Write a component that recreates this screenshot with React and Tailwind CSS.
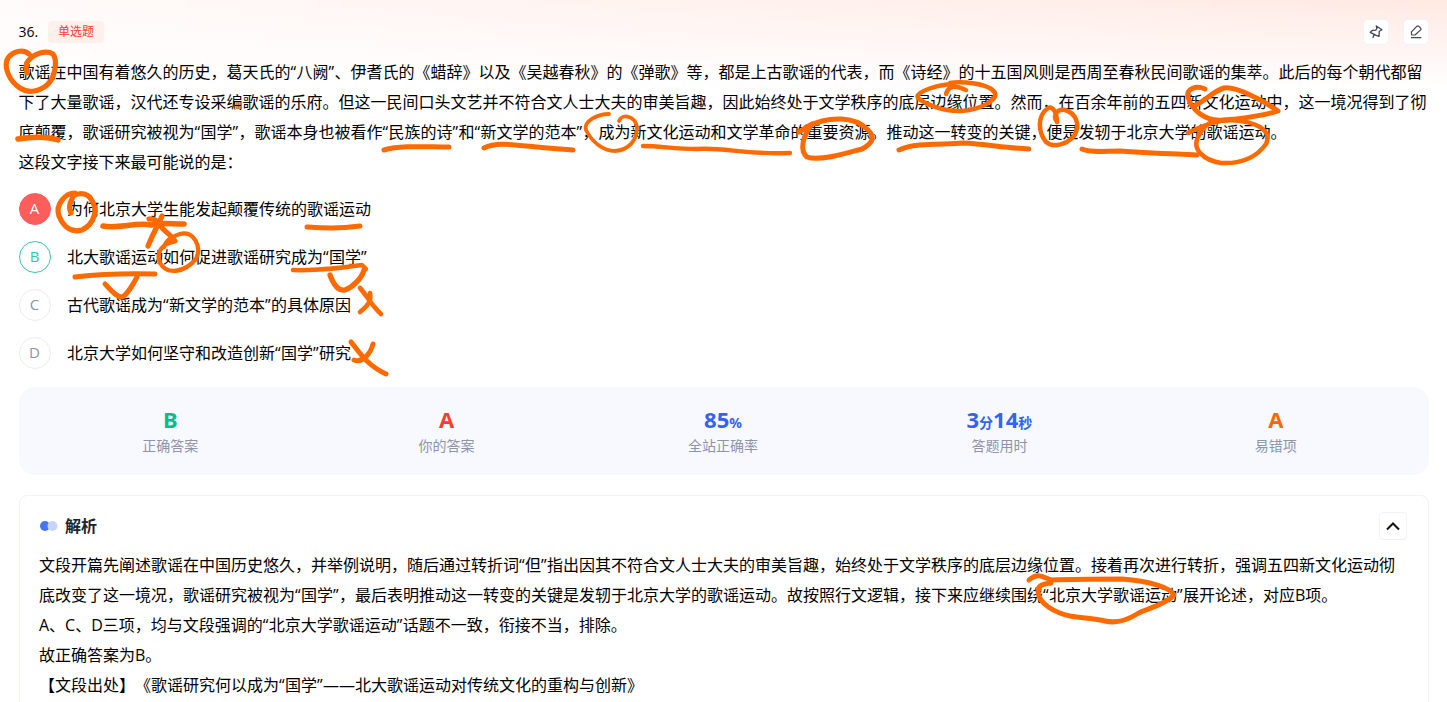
import React from "react";

const passage = [
  "歌谣在中国有着悠久的历史，葛天氏的“八阙”、伊耆氏的《蜡辞》以及《吴越春秋》的《弹歌》等，都是上古歌谣的代表，而《诗经》的十五国风则是西周至春秋民间歌谣的集萃。此后的每个朝代都留",
  "下了大量歌谣，汉代还专设采编歌谣的乐府。但这一民间口头文艺并不符合文人士大夫的审美旨趣，因此始终处于文学秩序的底层边缘位置。然而，在百余年前的五四新文化运动中，这一境况得到了彻",
  "底颠覆，歌谣研究被视为“国学”，歌谣本身也被看作“民族的诗”和“新文学的范本”，成为新文化运动和文学革命的重要资源。推动这一转变的关键，便是发轫于北京大学的歌谣运动。",
  "这段文字接下来最可能说的是：",
];

const options = [
  { key: "A", text: "为何北京大学生能发起颠覆传统的歌谣运动", style: "bg-[#ff5c5c] border-[#ff5c5c] text-white" },
  { key: "B", text: "北大歌谣运动如何促进歌谣研究成为“国学”", style: "bg-white border-[#34c9a3] text-[#34c9a3]" },
  { key: "C", text: "古代歌谣成为“新文学的范本”的具体原因", style: "bg-white border-[#e9edf9] text-[#8a94ad]" },
  { key: "D", text: "北京大学如何坚守和改造创新“国学”研究", style: "bg-white border-[#e9edf9] text-[#8a94ad]" },
];

const stats = [
  { label: "正确答案", color: "text-[#00bf8f]", parts: [["B", true]] },
  { label: "你的答案", color: "text-[#ff3b30]", parts: [["A", true]] },
  { label: "全站正确率", color: "text-[#2f64f5]", parts: [["85", true], ["%", false]] },
  { label: "答题用时", color: "text-[#2f64f5]", parts: [["3", true], ["分", false], ["14", true], ["秒", false]] },
  { label: "易错项", color: "text-[#ff6600]", parts: [["A", true]] },
];

const analysis = [
  "文段开篇先阐述歌谣在中国历史悠久，并举例说明，随后通过转折词“但”指出因其不符合文人士大夫的审美旨趣，始终处于文学秩序的底层边缘位置。接着再次进行转折，强调五四新文化运动彻",
  "底改变了这一境况，歌谣研究被视为“国学”，最后表明推动这一转变的关键是发轫于北京大学的歌谣运动。故按照行文逻辑，接下来应继续围绕“北京大学歌谣运动”展开论述，对应B项。",
  "A、C、D三项，均与文段强调的“北京大学歌谣运动”话题不一致，衔接不当，排除。",
  "故正确答案为B。",
  "【文段出处】《歌谣研究何以成为“国学”——北大歌谣运动对传统文化的重构与创新》",
];

const strokes = [
  [5.2, "M29 54C23 49 13 51 8 58C3 66 9 81 20 88C29 94 40 91 47 85C55 78 58 61 53 54C46 50 34 53 28 61C25 64 26 69 27 73"],
  [5.5, "M18 139C30 137 46 136 58 140"],
  [5, "M384 150C402 145 425 147 449 147"],
  [5, "M484 148C500 140 520 147 573 150"],
  [3.8, "M609 114C598 114 583 121 586 130C592 142 603 151 615 151C629 150 637 140 637 128C636 116 622 113 619 121"],
  [4.4, "M643 146C660 146 675 149 697 149C725 147 744 155 790 153"],
  [5, "M799 132L812 124C803 136 799 150 807 157C820 162 850 152 862 149C873 143 876 137 867 129C855 117 830 115 806 127"],
  [5, "M899 150C916 142 945 145 963 143C985 144 1006 148 1029 149"],
  [4.5, "M946 94C949 84 957 86 966 90M955 84C939 84 914 92 918 98C925 104 944 112 961 111C981 110 998 99 995 93C990 83 960 81 950 83"],
  [4.5, "M1057 122C1052 115 1057 109 1065 110C1076 113 1081 125 1074 136C1066 145 1053 148 1046 142C1038 132 1037 116 1048 108C1052 106 1057 111 1057 122"],
  [5, "M1082 149C1091 153 1104 151 1120 151C1150 153 1174 154 1197 155"],
  [5, "M1205 89C1196 85 1186 89 1188 97C1191 109 1205 122 1223 120C1240 119 1266 115 1278 111C1261 99 1235 86 1224 88C1214 91 1207 99 1196 105"],
  [4.5, "M1188 133C1204 125 1220 118 1241 121C1260 124 1272 132 1266 144C1256 158 1240 164 1221 163C1203 160 1192 149 1198 137C1202 128 1207 123 1215 121"],
  [5.2, "M75 193C65 193 55 205 59 216C64 228 72 233 82 230C94 224 99 210 91 199C86 191 73 193 72 199C69 204 69 209 71 213"],
  [5.5, "M103 226C119 229 136 222 151 225C163 222 170 224 184 224"],
  [5.2, "M149 219C158 218 160 225 163 229C168 233 172 237 175 241M162 216C158 226 154 231 148 246"],
  [5, "M307 227C323 228 337 229 360 226"],
  [4.3, "M164 247C166 240 173 236 180 234C194 230 202 247 196 259C184 273 167 275 160 263C156 252 162 244 173 242"],
  [5, "M75 277C101 274 119 273 155 274"],
  [5, "M105 284C111 290 116 297 122 297C127 295 131 288 137 277"],
  [4.5, "M293 270C318 271 341 268 362 265L366 269"],
  [5.2, "M330 275C334 286 339 291 345 290C353 287 362 278 364 270"],
  [4.6, "M360 288C365 293 371 305 381 314M370 293C372 302 366 307 360 312"],
  [5, "M351 342C358 350 366 365 386 374M373 344C371 352 363 364 354 360"],
  [5, "M1029 580C1039 571 1045 579 1052 580C1075 579 1105 579 1122 579C1150 581 1171 588 1174 595C1164 606 1144 609 1137 614C1129 619 1118 624 1105 621C1095 619 1083 618 1070 616C1056 613 1038 604 1038 591C1038 584 1045 584 1051 583"],
];

// Curly quotes get slightly wider tracking than the surrounding ideographs.
function Line({ text }) {
  return text.split(/([“”])/).map((part, i) =>
    part === "“" || part === "”" ? (
      <span key={i} className="tracking-[0.4px]">{part}</span>
    ) : (
      part
    )
  );
}

function IconButton({ children }) {
  return (
    <div className="flex size-[26px] items-center justify-center rounded-[5px] border border-[#f0f3fd] bg-white">
      {children}
    </div>
  );
}

export default function App() {
  return (
    <div className="relative h-[702px] w-full overflow-hidden bg-white font-['Open_Sans','Noto_Sans_CJK_SC',sans-serif] text-[16px] text-black [text-spacing-trim:space-all]">
      <div className="absolute inset-x-0 top-0 h-[90px] bg-linear-to-b from-[#ffe9e3] to-white" />
      <div className="absolute inset-x-0 top-0 h-[90px] bg-linear-to-r from-white/80 to-transparent" />
      <main className="relative pr-[19px] pl-[18.5px]">
        <header className="flex h-[57px] items-center justify-between pt-[7px]">
          <div className="flex items-center">
            <span className="w-[29.5px] pb-[2px] text-[14px]">36.</span>
            <span className="h-[22px] rounded bg-[#fff0ec] px-[10px] text-[12px] leading-[22px] text-[#ff3b30]">单选题</span>
          </div>
          <div className="-mr-px flex gap-[14px]">
            <IconButton>
              <svg width="16" height="16" viewBox="0 0 16 16" fill="none" stroke="#404856" strokeWidth="1.3" strokeLinejoin="round" strokeLinecap="round" className="shrink-0">
                <path d="M8.3 2L14 5.7L11.3 7.2L11 12.4L8.2 11.3L2.2 8.3L4.2 6.5L7.8 6.2L8.9 4.6ZM6 10.5L5 13.6" />
              </svg>
            </IconButton>
            <IconButton>
              <svg width="16" height="16" viewBox="0 0 16 16" fill="none" stroke="#404856" strokeWidth="1.2" strokeLinejoin="round" className="shrink-0">
                <path d="M3.6 10.8L3.4 7.9L9 2.1H10.6L12.9 4.4V5.6L7 11ZM3 13.6H13.3" />
              </svg>
            </IconButton>
          </div>
        </header>
        <section className="text-[16px] leading-[30px]">
          {passage.map((line) => (
            <p key={line} className="h-[30px] whitespace-nowrap"><Line text={line} /></p>
          ))}
        </section>
        <section className="flex flex-col gap-4 pt-4 pl-[0.5px]">
          {options.map((o) => (
            <div key={o.key} className="flex h-8 items-center gap-4">
              <span className={"flex size-8 items-center justify-center rounded-full border pr-px pb-px text-[15px] " + o.style}>{o.key}</span>
              <span className="whitespace-nowrap"><Line text={o.text} /></span>
            </div>
          ))}
        </section>
        <section className="mt-[18px] -mr-px ml-[0.5px] grid h-[88px] grid-cols-5 rounded-2xl bg-[#f8f9fe] pr-[15px] pl-[13px] pt-[19px]">
          {stats.map((s) => (
            <div key={s.label} className="flex flex-col items-center">
              <div className={"flex h-[27px] items-baseline font-['Noto_Sans','Noto_Sans_CJK_SC',sans-serif] font-bold leading-[26px] " + s.color}>
                {s.parts.map(([text, big]) => (
                  <span key={text} className={big ? "text-[22px]" : "text-[14px]"}>{text}</span>
                ))}
              </div>
              <span className="text-[14px] leading-[26px] text-[#8d94aa]">{s.label}</span>
            </div>
          ))}
        </section>
        <section className="mt-[20px] -mr-px ml-[0.5px] h-[240px] rounded-lg border border-[#f1f2f9] bg-white pt-4 pr-[21px] pl-[19px]">
          <div className="flex h-7 items-center justify-between">
            <div className="flex items-center gap-[7px]">
              <svg width="19" height="10" viewBox="-1 0 19 10">
                <circle cx="5" cy="5" r="5" fill="#4673fb" />
                <circle cx="12.5" cy="5" r="5" fill="#c7d4ff" />
              </svg>
              <h2 className="text-[16px] font-bold text-[#20242c]">解析</h2>
            </div>
            <div className="flex size-7 items-center justify-center rounded border border-[#f0f2fb]">
              <svg width="14" height="9" viewBox="0 0 14 9" fill="none" stroke="#111" strokeWidth="2">
                <path d="M1 7.5L7 1.5L13 7.5" />
              </svg>
            </div>
          </div>
          <div className="pt-[10px] leading-[30px]">
            {analysis.map((line) => (
              <p key={line} className="h-[30px] whitespace-nowrap"><Line text={line} /></p>
            ))}
          </div>
        </section>
      </main>
      <svg className="pointer-events-none absolute inset-0" width="1447" height="702" viewBox="0 0 1447 702" fill="none" stroke="#ff6a00" strokeLinecap="round" strokeLinejoin="round">
        {strokes.map(([width, d]) => (
          <path key={d} d={d} strokeWidth={width} />
        ))}
      </svg>
    </div>
  );
}
